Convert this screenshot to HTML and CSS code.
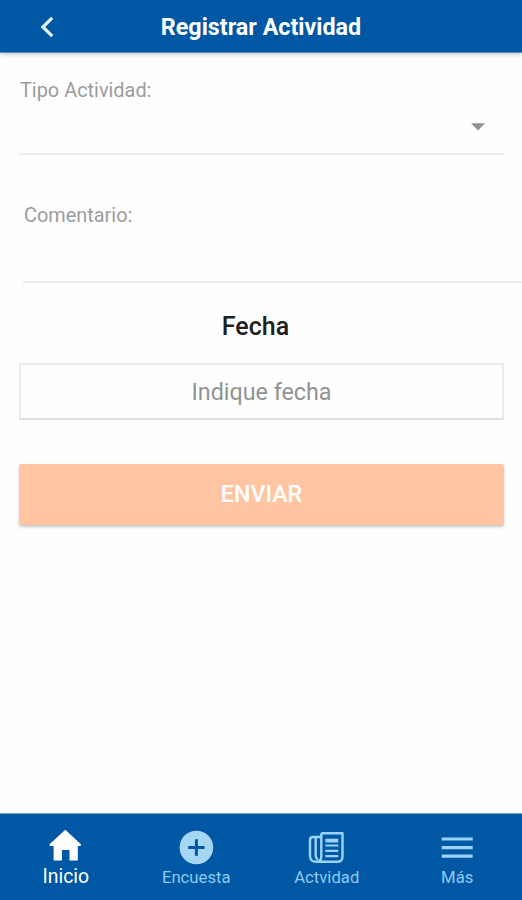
FILE: index.html
```html
<!DOCTYPE html>
<html lang="es">
<head>
<meta charset="utf-8">
<title>Registrar Actividad</title>
<link rel="stylesheet" href="styles.css">
</head>
<body>
<header class="bar">
  <svg class="back" width="16" height="24" viewBox="0 0 16 24"><path d="M13.2 2.8 3.9 12l9.3 9.2"/></svg>
  <h1 class="title">Registrar Actividad</h1>
</header>
<main class="form">
  <section class="field field-type">
    <label class="label">Tipo Actividad:</label>
    <svg class="caret" width="14" height="8" viewBox="0 0 14 8"><path d="M0 .3h14L7 7.6z"/></svg>
  </section>
  <section class="field field-comment">
    <label class="label">Comentario:</label>
  </section>
  <h2 class="heading">Fecha</h2>
  <div class="date">Indique fecha</div>
  <button class="send">ENVIAR</button>
</main>
<nav class="tabs">
  <a class="tab active">
    <svg class="icon" width="38" height="36" viewBox="0 0 38 36"><path class="fill" d="M19.3 .8 35.2 15.5 34.4 17h-2.6v14.5h-8.3V21h-7.6v10.5H7.6V17H4l-.7-1.5z"/></svg>
    <span class="tab-label">Inicio</span>
  </a>
  <a class="tab">
    <svg class="icon" width="38" height="36" viewBox="0 0 38 36"><circle class="fill" cx="19.4" cy="18.5" r="16.8"/><path class="plus" d="M19.4 10.3v16.4M11.2 18.5h16.4"/></svg>
    <span class="tab-label">Encuesta</span>
  </a>
  <a class="tab">
    <svg class="icon" width="38" height="36" viewBox="0 0 38 36"><path class="line" d="M14.3 4.2h21.2v23q0 5.6-5 5.6H9.3q-6.3 0-6.3-6V11q0-3 3-3h8.3M14.3 4.2v23q0 5-4 5.2M8.7 8v18.5q0 3 2.4 3.6"/><path class="rows" d="M18.3 16.5h13M18.3 21.8h13M18.3 27.1h13"/><path class="photo" d="M18.3 9.7h13v3.8h-13z"/></svg>
    <span class="tab-label">Actvidad</span>
  </a>
  <a class="tab">
    <svg class="icon" width="38" height="36" viewBox="0 0 38 36"><path class="menu" d="M3.7 10h31M3.7 18.6h31M3.7 27.2h31"/></svg>
    <span class="tab-label">Más</span>
  </a>
</nav>
</body>
</html>
```
FILE: styles.css
```css
* { box-sizing: border-box; }
body {
  margin: 0;
  height: 900px;
  display: flex;
  flex-direction: column;
  overflow: hidden;
  background: #fefefe;
  font-family: Roboto, sans-serif;
}
.bar {
  height: 53px;
  display: grid;
  grid-template-columns: 62px 1fr 62px;
  align-items: center;
  background: #0057a4;
  border-bottom: 1px solid #5c8bc2;
  box-shadow: 0 1px 5px rgba(0, 0, 0, .25);
}
.back { margin: 2px 0 0 39px; fill: none; stroke: #e4f5ff; stroke-width: 3.2; }
.title {
  margin: 2px 0 0;
  text-align: center;
  color: #fff;
  font-size: 23.3px;
  line-height: 30px;
  font-weight: 700;
}
.form { flex: 1; display: flex; flex-direction: column; padding: 0 18px 0 19px; }
.field { display: flex; flex-direction: column; border-bottom: 2px solid #eee; }
.field-type { height: 102px; padding: 26px 0 0 1px; }
.field-comment { height: 128px; margin: 0 -18px 0 4px; padding: 49px 0 0 1px; }
.label { color: #9c9c9c; font-size: 19.9px; line-height: 24px; }
.caret { align-self: flex-end; margin: 20px 19px 0 0; fill: #929292; }
.heading {
  margin: 29px 12px 0 0;
  text-align: center;
  color: #202020;
  font-size: 25px;
  line-height: 30px;
  font-weight: 500;
}
.date {
  height: 57px;
  margin-top: 21px;
  border: 2px solid #ebebeb;
  border-bottom-color: #dedede;
  text-align: center;
  color: #929292;
  font-size: 23.3px;
  line-height: 54px;
}
.send {
  height: 61px;
  margin-top: 44px;
  padding: 0;
  border: 0;
  border-radius: 2px;
  background: #ffc5a3;
  box-shadow: 0 2px 3px rgba(0, 0, 0, .22);
  color: #fff;
  font: 500 23.2px/61px Roboto, sans-serif;
}
.tabs {
  height: 87px;
  display: grid;
  grid-template-columns: repeat(4, 1fr);
  background: #0057a4;
  border-top: 1px solid #76a8cb;
}
.tab { display: flex; flex-direction: column; align-items: center; padding-top: 15px; color: #8dcaf1; }
.tab-label { margin: 1px 0 0 1px; font-size: 16.7px; line-height: 23px; }
.active { color: #fff; }
.active .tab-label { margin-top: 0; font-size: 19.4px; }
.icon { fill: none; stroke: none; }
.fill { fill: #a5d6f4; }
.active .fill { fill: #fff; }
.plus { stroke: #0057a4; stroke-width: 3; }
.line { stroke: #9bd3f8; stroke-width: 2.4; stroke-linejoin: round; }
.rows { stroke: #9bd3f8; stroke-width: 2.2; }
.photo { fill: #9bd3f8; }
.menu { stroke: #9bd3f8; stroke-width: 3.2; }
```
